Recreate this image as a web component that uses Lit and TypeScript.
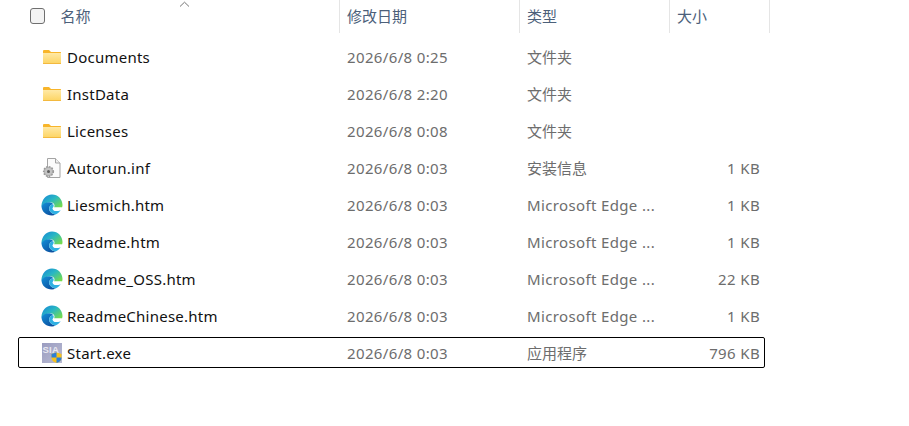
import { LitElement, html, css } from "lit";
import { customElement } from "lit/decorators.js";

const folder = html`<svg viewBox="0 0 18 14" width="18" height="14"><defs><linearGradient id="fg" x1="0" y1="0" x2="0" y2="1"><stop offset="0" stop-color="#ffe9a6"/><stop offset="1" stop-color="#fdd461"/></linearGradient></defs>
<path d="M0 1Q0 0 1 0H6L8 2H17.5Q18 2 18 2.5V13Q18 14 17 14H1Q0 14 0 13Z" fill="#f8b52a"/>
<rect x="0" y="3" width="18" height="11" fill="url(#fg)"/><rect x="0" y="13" width="18" height="1" fill="#f3b93f"/></svg>`;

const inf = html`<svg viewBox="0 0 20 20" width="20" height="20">
<path d="M5.5 .5H13.5L18 5V19.5H5.5Z" fill="#fbfbfb" stroke="#a4a4a4"/><path d="M13.5 .5V5H18" fill="#eee" stroke="#a4a4a4"/>
<circle cx="6.5" cy="13.5" r="4.8" fill="#b5b5b5" stroke="#9a9a9a" stroke-width="1.6" stroke-dasharray="1.6 1.2"/><circle cx="6.5" cy="13.5" r="3.4" fill="#c4c4c4"/><circle cx="6.5" cy="13.5" r="1.5" fill="#5e5e5e"/></svg>`;

const edge = html`<svg viewBox="0 0 22 22" width="22" height="22"><defs>
<linearGradient id="e1" x1="0" y1="0" x2="1" y2=".8"><stop offset="0" stop-color="#1783d8"/><stop offset=".5" stop-color="#28b6c4"/><stop offset="1" stop-color="#74dc4f"/></linearGradient>
<linearGradient id="e2" x1="0" y1="0" x2=".8" y2="1"><stop offset="0" stop-color="#1391d9"/><stop offset="1" stop-color="#0b4c9c"/></linearGradient></defs>
<path d="M11 .5C17 .5 21.5 5.2 21.5 11C21.5 12 21.4 12.8 21 13.5H13C13.6 12.5 13.7 11.6 13.3 10.6C12.5 8.6 10 8 7.5 8.5C5 9 2 10.5.5 12.5C.4 6 5 .5 11 .5Z" fill="url(#e1)"/>
<path d="M.5 12C2 9.5 6 7.8 9.5 8.4C11 8.7 12 9.4 12.2 10.2C9.6 10.4 8 12.4 8.2 15C8.4 17.6 11 20 14.5 20.4C13.4 21.1 12.2 21.5 11 21.5C5 21.5.5 17.5.5 12Z" fill="url(#e2)"/>
<path d="M12.2 10.2C13 11 12.8 12.5 12 13.5C11.4 14.4 11.6 15.6 13 16.4C14.8 17.3 17.4 17.2 19.6 16C18.6 18 16.5 19.8 14.5 20.4C11 20 8.4 17.6 8.2 15C8 12.4 9.6 10.4 12.2 10.2Z" fill="#2fb0e2"/>
<path d="M12 13.5H21C20.8 14.4 20.2 15.3 19.6 16C17.4 17.2 14.8 17.3 13 16.4C11.6 15.6 11.4 14.4 12 13.5Z" fill="#fff"/></svg>`;

const sia = html`<svg viewBox="0 0 20 20" width="20" height="20"><defs><linearGradient id="s" x1="0" y1="0" x2="1" y2="1"><stop offset="0" stop-color="#9a9cc0"/><stop offset="1" stop-color="#b9bbd3"/></linearGradient></defs>
<rect width="20" height="20" fill="url(#s)"/><text x="0.5" y="9.5" font-family="Liberation Sans" font-size="9.5" font-weight="700" fill="#e8e8f0">SIA</text>
<path d="M14.5 9.5L19.5 11V15C19.5 17.5 17 19.2 14.5 20C12 19.2 9.5 17.5 9.5 15V11Z" fill="#f6c21c"/>
<path d="M14.5 9.5V14.5H9.5V11Z" fill="#2d7fd6"/><path d="M14.5 14.5H19.5V15C19.5 17.5 17 19.2 14.5 20Z" fill="#2d7fd6"/></svg>`;

const rows: [any, string, string, string, string][] = [
  [folder, "Documents", "2026/6/8 0:25", "文件夹", ""],
  [folder, "InstData", "2026/6/8 2:20", "文件夹", ""],
  [folder, "Licenses", "2026/6/8 0:08", "文件夹", ""],
  [inf, "Autorun.inf", "2026/6/8 0:03", "安装信息", "1 KB"],
  [edge, "Liesmich.htm", "2026/6/8 0:03", "Microsoft Edge ...", "1 KB"],
  [edge, "Readme.htm", "2026/6/8 0:03", "Microsoft Edge ...", "1 KB"],
  [edge, "Readme_OSS.htm", "2026/6/8 0:03", "Microsoft Edge ...", "22 KB"],
  [edge, "ReadmeChinese.htm", "2026/6/8 0:03", "Microsoft Edge ...", "1 KB"],
  [sia, "Start.exe", "2026/6/8 0:03", "应用程序", "796 KB"],
];

@customElement("app-root")
export class AppRoot extends LitElement {
  static styles = css`
    :host { display: block; width: 909px; height: 426px; background: #fff; overflow: hidden;
      font-family: "Noto Sans", "Noto Sans CJK SC", sans-serif; font-size: 15px; letter-spacing: .36px; color: #6d6d6d; }
    .head { display: grid; grid-template-columns: 339px 180px 150px 100px 1px; height: 33px; width: 770px; position: relative; letter-spacing: 0; }
    .head > div { display: flex; align-items: center; height: 33px; padding-left: 7px; padding-bottom: 3px; box-sizing: border-box;
      border-left: 1px solid #e5e5e5; color: #4c607a; }
    .head > div.n { border-left: 0; padding-left: 30px; gap: 15px; padding-bottom: 1px; }
    .n .lbl { position: relative; top: -1px; }
    .check { width: 13.4px; height: 13.4px; border: 1.4px solid #6f6f6f; border-radius: 3px; background: #f3f3f3; }
    .sort { position: absolute; left: 179px; top: 1px; }
    .list { display: flex; flex-direction: column; gap: 6px; padding-top: 8px; margin-left: 18px; width: 747px; }
    .row { display: grid; grid-template-columns: 321px 180px 150px 91px; height: 31px; align-items: center; box-sizing: border-box; }
    .row.sel { border: 1px solid #000; border-radius: 2px; grid-template-columns: 320px 180px 150px 91px; }
    .row.sel .name { padding-left: 23px; }
    .name { display: flex; align-items: center; gap: 4px; padding-left: 23px; color: #111; letter-spacing: .24px; }
    .row.sel .name { padding-left: 22px; }
    .ic { width: 22px; height: 22px; display: flex; align-items: center; justify-content: center; }
    .cell { padding-left: 8px; white-space: nowrap; }
    .cjk { letter-spacing: 0; }
    .size { text-align: right; }
  `;
  render() {
    return html`
      <div class="head">
        <div class="n"><span class="check"></span><span class="lbl">名称</span></div>
        <div>修改日期</div><div>类型</div><div>大小</div><div></div>
        <svg class="sort" width="11" height="7" viewBox="0 0 11 7"><path d="M1 5.5L5.5 1.2L10 5.5" fill="none" stroke="#767676"/></svg>
      </div>
      <div class="list">
        ${rows.map((r, i) => html`<div class="row ${i === rows.length - 1 ? "sel" : ""}">
          <div class="name"><span class="ic">${r[0]}</span><span>${r[1]}</span></div>
          <div class="cell">${r[2]}</div><div class="cell"><span class="${/^M/.test(r[3]) ? "" : "cjk"}">${r[3]}</span></div><div class="size">${r[4]}</div>
        </div>`)}
      </div>`;
  }
}
